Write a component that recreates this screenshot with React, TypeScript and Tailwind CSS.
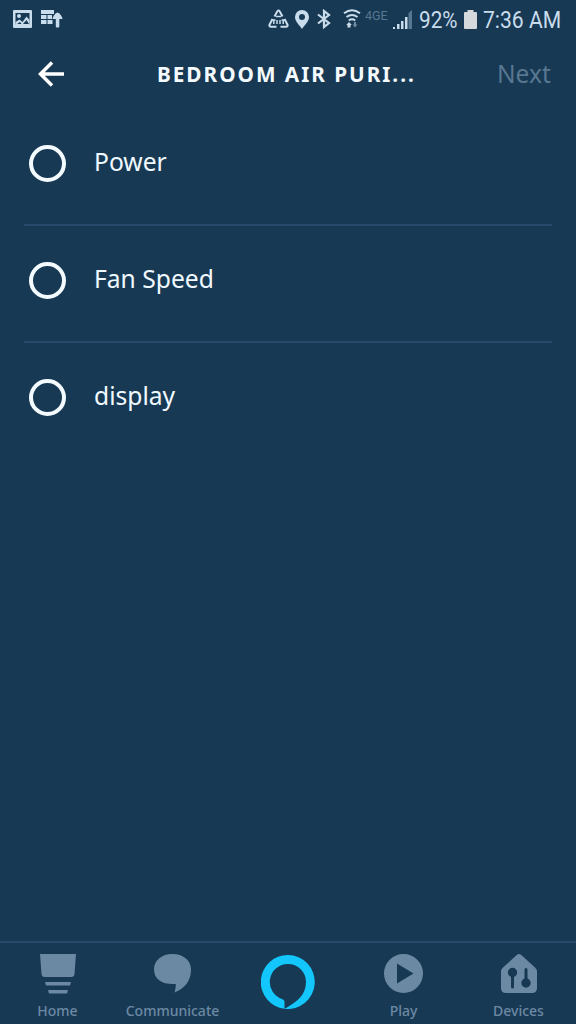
import type { ReactNode } from "react";

const options = ["Power", "Fan Speed", "display"];

function StatusBar() {
  return (
    <div className="flex h-[38px] items-center pl-[13px] text-[#c9dcec]">
      {/* notifications */}
      <svg width="19" height="18" viewBox="0 0 19 18">
        <path fill="currentColor" fillRule="evenodd" d="M1 0h17a1 1 0 0 1 1 1v16a1 1 0 0 1-1 1H1a1 1 0 0 1-1-1V1a1 1 0 0 1 1-1zM2.500 3v11.500h14V3z" />
        <circle cx="6" cy="6" r="2" fill="currentColor" />
        <path fill="currentColor" d="M2.500 15v-3l4-2.500 3 2.500 4-5.500 3 3.500v5z" />
        <path fill="#183954" d="M4 14l3-2 1.500 2zM10 14l3.500-4 2.500 4z" />
      </svg>
      <svg className="ml-[9px]" width="22" height="18" viewBox="0 0 22 18" fill="currentColor">
        <path d="M0 0h13v4H0zM0 5h5.500v4H0zM6.500 5h4.500v4H6.500zM0 10h5.500v4H0zM6.500 10h5v4H6.500z" />
        <path d="M16.500 2.500c3 1 4.500 4 5 6.500h-3.200v7.500a1 1 0 0 1-1 1h-1.500a1 1 0 0 1-1-1V9h-3.300c.5-2.500 2-5.500 5-6.500z" />
      </svg>

      {/* system icons */}
      <svg className="ml-[205px]" width="21" height="20" viewBox="0 0 21 20" fill="none" stroke="currentColor" strokeWidth="2">
        <path d="M6.500 7.500l2.700-5q1.300-2 2.600 0l2.700 5M4.500 10l-3 5.700q-.7 2 1.500 2H8.500M16.500 10l3 5.700q.7 2-1.500 2H12.500" />
        <path d="M5.800 11v4M15.200 11v4M9 11v4M12 11v4" strokeWidth="1.500" />
        <path d="M3.500 11h4M13.500 11h4M8 7.500h5" strokeWidth="1.300" />
      </svg>
      <svg className="ml-1.5" width="14" height="19" viewBox="0 0 14 19">
        <path fill="currentColor" fillRule="evenodd" d="M7 0a7 7 0 0 1 7 7c0 4.500-4.500 8-7 12C4.500 15 0 11.500 0 7a7 7 0 0 1 7-7zm0 4a3 3 0 1 0 0 6 3 3 0 0 0 0-6z" />
      </svg>
      <svg className="ml-2" width="14" height="20" viewBox="0 0 14 20" fill="none" stroke="currentColor" strokeWidth="2.200">
        <path d="M1 5.500l11 8.500-5 4V2l5 4-11 8.500" />
      </svg>
      <svg className="ml-3" width="18" height="20" viewBox="0 0 18 20" fill="none" stroke="currentColor" strokeWidth="2">
        <path d="M1 4.300q8-6 16 0M3.500 8q5.500-4 11 0M5.800 11.500q3.200-2.500 6.400 0" />
        <path fill="currentColor" stroke="none" d="M6 13l2.800 3H7.500v2.500h-3V16H3.300z" />
        <path fill="currentColor" stroke="none" opacity=".5" d="M12 18.500l-2.500-3H11V13h2v2.500h1.500z" />
      </svg>
      <span className="ml-1 mb-1.5 w-[23px] whitespace-nowrap font-[Roboto,sans-serif] text-[12px] leading-none text-[#587791]">
        <span className="inline-block origin-left scale-x-[1.040]">4GE</span>
      </span>
      <svg className="ml-[5px] mt-px" width="20" height="20" viewBox="0 0 20 20">
        <path fill="currentColor" d="M0 17h2v2H0zM4 14h2.500v5H4zM8 11h2.500v8H8zM12 7h2.500v12H12z" />
        <path fill="#587791" d="M15.500 3l3.500-3v19h-3.500z" />
      </svg>
      <span className="ml-1.5 mt-[2px] w-[39px] whitespace-nowrap font-[Roboto,sans-serif] text-[24px] leading-none">
        <span className="inline-block origin-left scale-x-[0.865]">92%</span>
      </span>
      <svg className="ml-[6px]" width="13" height="19" viewBox="0 0 13 19" fill="#d5d9dc">
        <path d="M3.500 0h6v2H12a1 1 0 0 1 1 1v15a1 1 0 0 1-1 1H1a1 1 0 0 1-1-1V3a1 1 0 0 1 1-1h2.500z" />
      </svg>
      <span className="ml-1.5 mt-[2px] w-[80px] whitespace-nowrap font-[Roboto,sans-serif] text-[24px] leading-none">
        <span className="inline-block origin-left scale-x-[0.880]">7:36 AM</span>
      </span>
    </div>
  );
}

function Header() {
  return (
    <header className="flex h-[71px] items-center pl-[38px]">
      <button aria-label="Back">
        <svg width="26" height="26" viewBox="0 0 26 26" fill="none" stroke="#fff" strokeWidth="3.500">
          <path d="M26 13H3M14 1.500L2.500 13 14 24.500" />
        </svg>
      </button>
      <h1 className="ml-[93px] mt-px w-[270px] whitespace-nowrap text-[21.500px] font-bold leading-none text-[#f4fbff]">
        <span className="inline-block origin-left scale-x-[0.965] tracking-[2.050px]">BEDROOM AIR PURI...</span>
      </h1>
      <button className="ml-[70px] text-[25px] leading-none text-[#587791]">
        <span className="inline-block origin-left scale-x-[0.980]">Next</span>
      </button>
    </header>
  );
}

function Option({ label }: { label: string }) {
  return (
    <li className="flex h-[117px] items-start border-b-2 border-[#28496a] pl-[5px] pt-[36px] last:border-transparent">
      <span className="size-[37px] shrink-0 rounded-full border-4 border-[#f4fbff]" />
      <span className="ml-[28px] origin-left scale-x-[0.985] text-[25px] leading-[32px] text-[#f0f9ff]">{label}</span>
    </li>
  );
}

function Tab({ label, children }: { label: string; children: ReactNode }) {
  return (
    <button className="flex w-[115px] flex-col items-center pt-[11px]">
      <span className="flex h-[40px] items-start">{children}</span>
      <span className="mt-[8px] text-[14px] font-medium leading-[18px]">{label}</span>
    </button>
  );
}

function TabBar() {
  return (
    <nav className="flex h-[83px] border-t-2 border-[#28496a] text-[#6c89a3]">
      <Tab label="Home">
        <svg width="36" height="40" viewBox="0 0 36 40" fill="currentColor">
          <path d="M0 0h36l-1.500 20q-.2 3-3 3h-27q-2.800 0-3-3zM5 28h26l-1 3.500H6zM8 36h20l-1 3.500H9z" />
        </svg>
      </Tab>
      <Tab label="Communicate">
        <svg width="37" height="39" viewBox="0 0 37 39" fill="currentColor">
          <path d="M18.500 0C29 0 37 6 37 15.500c0 11-6 19-16.500 23 .8-2.500 1.300-5.500 1.300-8.500C9 31 0 25.500 0 15.500 0 6 8 0 18.500 0z" />
        </svg>
      </Tab>
      <button aria-label="Alexa" className="flex w-[116px] items-start justify-center pt-[12px]">
        <svg width="54" height="54" viewBox="0 0 54 54">
          <path
            fill="#13c6fc"
            fillRule="evenodd"
            d="M27 0a27 27 0 1 1-3.500 53.800A27 27 0 0 1 27 0zm0 9a18 18 0 0 0-5.500 35.200q2 .7 2 2.800v6.800C36 47 45 40 45 27A18 18 0 0 0 27 9z"
          />
        </svg>
      </button>
      <Tab label="Play">
        <svg width="39" height="39" viewBox="0 0 39 39">
          <path fill="currentColor" fillRule="evenodd" d="M19.500 0a19.500 19.500 0 1 1 0 39 19.500 19.500 0 0 1 0-39zM13 9.500v20L29.500 19.500z" />
        </svg>
      </Tab>
      <Tab label="Devices">
        <svg width="36" height="39" viewBox="0 0 36 39">
          <path fill="currentColor" d="M16 .8q2-1.500 4 0l14 12.700q2 1.800 2 4.500v16q0 5-5 5H5q-5 0-5-5V18q0-2.700 2-4.500z" />
          <g fill="#183954" stroke="#183954" strokeWidth="3" strokeLinecap="round">
            <path d="M11.500 19v14M25 15.500V29" />
            <circle cx="11.500" cy="18.500" r="3.200" />
            <circle cx="25" cy="29" r="3.200" />
          </g>
        </svg>
      </Tab>
    </nav>
  );
}

export default function App() {
  return (
    <div className="flex h-[1024px] w-[576px] flex-col overflow-hidden bg-[#183954] font-['Noto_Sans','Open_Sans',sans-serif]">
      <StatusBar />
      <Header />
      <ul className="flex-1 px-6">
        {options.map((label) => (
          <Option key={label} label={label} />
        ))}
      </ul>
      <TabBar />
    </div>
  );
}
